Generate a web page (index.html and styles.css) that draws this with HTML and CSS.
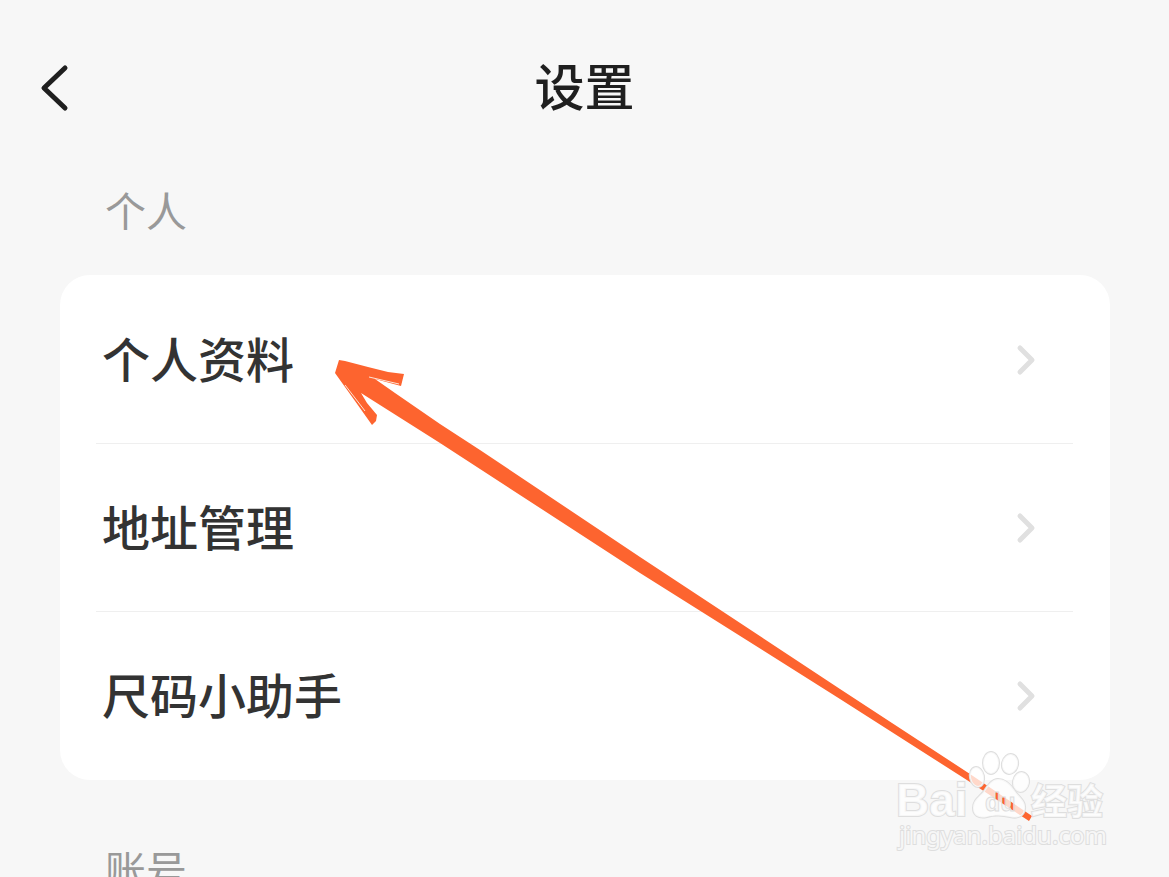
FILE: index.html
```html
<!DOCTYPE html>
<html lang="zh-CN">
<head>
	<meta charset="utf-8">
	<meta name="viewport" content="width=device-width, initial-scale=1">
	<title>设置</title>
	<link rel="stylesheet" href="styles.css">
</head>
<body>
	<header class="topbar">
		<button type="button" class="back" aria-label="返回">
			<svg width="32" height="50" viewBox="0 0 32 50"><path d="M27 5L6 25L27 45"/></svg>
		</button>
		<h1 class="title">设置</h1>
	</header>

	<main class="content">
		<h2 class="label">个人</h2>
		<nav class="card">
			<a class="row" href="#profile">
				<span class="name">个人资料</span>
				<svg class="arrow" width="24" height="36" viewBox="0 0 24 36"><path d="M6 6L18 18L6 30"/></svg>
			</a>
			<a class="row" href="#address">
				<span class="name">地址管理</span>
				<svg class="arrow" width="24" height="36" viewBox="0 0 24 36"><path d="M6 6L18 18L6 30"/></svg>
			</a>
			<a class="row" href="#size">
				<span class="name">尺码小助手</span>
				<svg class="arrow" width="24" height="36" viewBox="0 0 24 36"><path d="M6 6L18 18L6 30"/></svg>
			</a>
		</nav>
		<h2 class="label">账号</h2>
	</main>

	<!-- hand drawn pointer -->
	<svg class="pointer" width="710" height="470" viewBox="330 355 710 470">
		<path d="M339 360L345 361L368 367L388 372L404 374L401 386L375 379L395 393L440 424L480 450L640 557L840 689L970 774L1032 816L1029 821L970 782L840 699L640 573L440 443L361 393L367 403L377 415L376 421L372 425L355 401L335 373Z"/>
		<path class="gap" d="M369 377L399 384M345 385L365 411"/>
	</svg>

	<!-- watermark -->
	<svg class="mark" width="220" height="110" viewBox="890 745 220 110">
		<mask id="cut" maskUnits="userSpaceOnUse" x="960" y="745" width="80" height="80">
			<rect class="mask-on" x="960" y="745" width="80" height="80"/>
			<use class="mask-off" href="#du"/>
		</mask>
		<text class="mark-latin" x="896" y="816">Bai</text>
		<ellipse cx="977" cy="777" rx="7" ry="10" transform="rotate(-12 977 777)"/>
		<ellipse cx="991" cy="763" rx="8" ry="11"/>
		<ellipse cx="1010" cy="764" rx="8" ry="10" transform="rotate(12 1010 764)"/>
		<ellipse cx="1021" cy="782" rx="8" ry="10" transform="rotate(10 1021 782)"/>
		<g mask="url(#cut)">
			<path d="M998 779C1006 779 1011 785 1015 791C1020 798 1026 801 1025 809C1024 816 1018 819 1010 817C1002 815 994 815 987 817C978 819 973 815 973 808C973 800 979 797 984 791C988 785 992 779 998 779Z"/>
		</g>
		<g class="outline"><text id="du" class="mark-du" x="985" y="811">du</text></g>
		<text class="mark-cjk" x="1031" y="815">经验</text>
		<text class="mark-url" x="899" y="844">jingyan.baidu.com</text>
	</svg>
</body>
</html>
```

FILE: styles.css
```css
* {
	box-sizing: border-box;
}
body {
	margin: 0;
	position: relative;
	height: 100vh;
	overflow: hidden;
	background-color: #f7f7f7;
	color: #333;
	font-family: "Noto Sans CJK SC", sans-serif;
}
.topbar {
	display: grid;
	grid-template-columns: 80px 1fr 80px;
	align-items: center;
	height: 175px;
}
.back {
	display: flex;
	justify-content: center;
	padding: 0 0 0 28px;
	border: none;
	background: none;
	cursor: pointer;
}
.back svg {
	flex: none;
	fill: none;
	stroke: #1f1f1f;
	stroke-width: 5;
	stroke-linecap: round;
	stroke-linejoin: round;
}
.title {
	margin: 0;
	padding-bottom: 8px;
	text-align: center;
	font-size: 50px;
	font-weight: 500;
	line-height: 60px;
	color: #1f1f1f;
}
.content {
	padding: 0 59px 0 60px;
}
.label {
	margin: 0;
	padding: 4px 45px 36px;
	font-size: 41px;
	font-weight: 400;
	line-height: 60px;
	color: #999;
}
.card {
	padding: 1px 37px 0 36px;
	margin-bottom: 54px;
	border-radius: 30px;
	background-color: #fff;
}
.row {
	display: flex;
	align-items: center;
	justify-content: space-between;
	height: 168px;
	padding: 0 35px 0 6px;
	border-bottom: 1px solid #efefef;
	font-size: 48px;
	font-weight: 500;
	color: #333;
	text-decoration: none;
}
.row:last-child {
	border-bottom: none;
}
.name {
	padding-bottom: 6px;
}
.arrow {
	flex: none;
	fill: none;
	stroke: #e0e0e0;
	stroke-width: 5;
	stroke-linecap: round;
	stroke-linejoin: round;
}
.pointer {
	position: absolute;
	left: 330px;
	top: 355px;
	fill: #fd642f;
	pointer-events: none;
}
.pointer .gap {
	fill: none;
	stroke: #ffe3d6;
	stroke-width: 1;
}
.mark {
	position: absolute;
	left: 890px;
	top: 745px;
	pointer-events: none;
	fill: rgba(255, 255, 255, 0.75);
	stroke: #dedede;
	stroke-width: 2;
	paint-order: stroke;
}
.mark-latin {
	font-family: "Liberation Sans", sans-serif;
	font-size: 46px;
	font-weight: bold;
}
.mark-du {
	font-family: "Liberation Sans", sans-serif;
	font-size: 25px;
	font-weight: bold;
}
.mark-cjk {
	font-size: 36px;
	font-weight: 700;
}
.mark-url {
	font-family: "Noto Sans", sans-serif;
	font-size: 24px;
}
.outline {
	fill: none;
	stroke-width: 1;
}
.mask-on {
	fill: #fff;
	stroke: none;
}
.mask-off {
	fill: #000;
	stroke: none;
}
```
